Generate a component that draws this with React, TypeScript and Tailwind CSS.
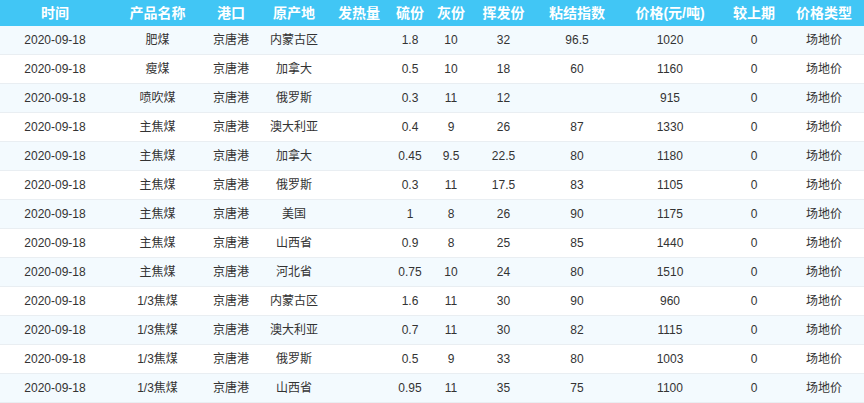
const headers = ['时间', '产品名称', '港口', '原产地', '发热量', '硫份', '灰份', '挥发份', '粘结指数', '价格(元/吨)', '较上期', '价格类型'];

const rows = [
  ['肥煤', '内蒙古区', '1.8', '10', '32', '96.5', '1020'],
  ['瘦煤', '加拿大', '0.5', '10', '18', '60', '1160'],
  ['喷吹煤', '俄罗斯', '0.3', '11', '12', '', '915'],
  ['主焦煤', '澳大利亚', '0.4', '9', '26', '87', '1330'],
  ['主焦煤', '加拿大', '0.45', '9.5', '22.5', '80', '1180'],
  ['主焦煤', '俄罗斯', '0.3', '11', '17.5', '83', '1105'],
  ['主焦煤', '美国', '1', '8', '26', '90', '1175'],
  ['主焦煤', '山西省', '0.9', '8', '25', '85', '1440'],
  ['主焦煤', '河北省', '0.75', '10', '24', '80', '1510'],
  ['1/3焦煤', '内蒙古区', '1.6', '11', '30', '90', '960'],
  ['1/3焦煤', '澳大利亚', '0.7', '11', '30', '82', '1115'],
  ['1/3焦煤', '俄罗斯', '0.5', '9', '33', '80', '1003'],
  ['1/3焦煤', '山西省', '0.95', '11', '35', '75', '1100'],
];

const cols = 'grid grid-cols-[110px_95px_52px_74px_56px_46px_36px_69px_78px_108px_60px_80px]';

export default function App() {
  return (
    <div className="w-[864px] h-[403px] overflow-hidden bg-white" style={{ fontFamily: '"Liberation Sans", Arial, "Noto Sans CJK SC", sans-serif' }}>
      <div className={`${cols} h-[26px] bg-[#41c6f5] text-white text-[14px] font-bold items-center`}>
        {headers.map(h => (
          <div key={h} className="text-center whitespace-nowrap">{h}</div>
        ))}
      </div>
      {rows.map((r, i) => {
        const cells = ['2020-09-18', r[0], '京唐港', r[1], '', r[2], r[3], r[4], r[5], r[6], '0', '场地价'];
        return (
          <div
            key={i}
            className={`${cols} h-[29px] items-center border-b border-[#e9eef2] text-[12px] text-[#333] ${i % 2 === 0 ? 'bg-[#f3fafe]' : 'bg-white'}`}
          >
            {cells.map((c, j) => (
              <div key={j} className="text-center whitespace-nowrap">{c}</div>
            ))}
          </div>
        );
      })}
    </div>
  );
}
